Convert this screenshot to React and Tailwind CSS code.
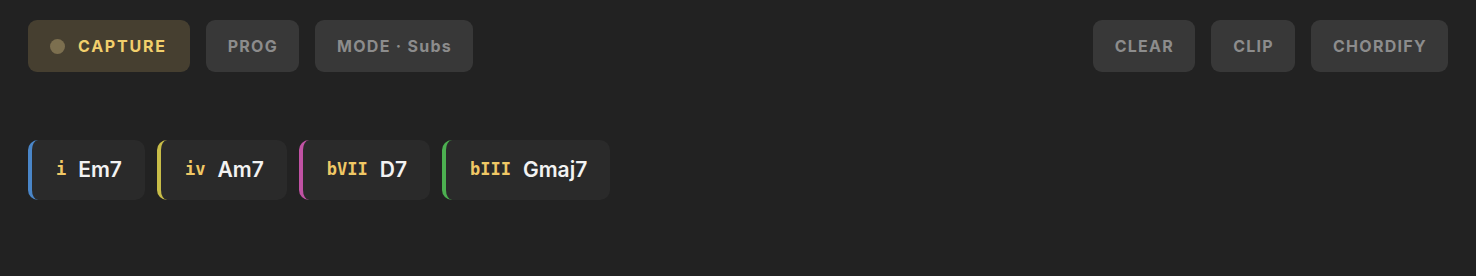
import React from "react";

const chords = [
  { num: "i", name: "Em7", color: "border-[#4a86c8]" },
  { num: "iv", name: "Am7", color: "border-[#c8bd48]" },
  { num: "bVII", name: "D7", color: "border-[#c152a4]" },
  { num: "bIII", name: "Gmaj7", color: "border-[#4caf50]" },
];

function Btn({ children }) {
  return (
    <button className="h-[52px] pl-[22px] pr-[21px] rounded-[9px] bg-[#383838] text-[#8c8c8c] text-[16px] font-bold tracking-[0.08em] flex items-center">
      {children}
    </button>
  );
}

export default function App() {
  return (
    <div
      className="w-[1476px] h-[276px] bg-[#222222] px-[28px] pt-[20px]"
      style={{ fontFamily: "Inter, 'Liberation Sans', sans-serif" }}
    >
      <div className="flex items-center justify-between">
        <div className="flex items-center gap-4">
          <button className="h-[52px] pl-[22px] pr-[23px] rounded-[9px] bg-[#463f30] flex items-center gap-[13px]">
            <span className="w-[15px] h-[15px] rounded-full bg-[#7c6f4f]" />
            <span className="text-[#f2cf6c] text-[16px] font-bold tracking-[0.11em]">CAPTURE</span>
          </button>
          <Btn>PROG</Btn>
          <Btn>MODE · Subs</Btn>
        </div>
        <div className="flex items-center gap-4">
          <Btn>CLEAR</Btn>
          <Btn>CLIP</Btn>
          <Btn>CHORDIFY</Btn>
        </div>
      </div>
      <div className="flex gap-3 mt-[68px]">
        {chords.map((c) => (
          <div
            key={c.name}
            className={`h-[60px] rounded-[10px] bg-[#2a2a2a] border-l-4 ${c.color} pl-[24px] pr-[23px] flex items-center gap-3`}
          >
            <span
              className="text-[#f0c865] text-[17px] font-bold"
              style={{ fontFamily: "'DejaVu Sans Mono', monospace" }}
            >
              {c.num}
            </span>
            <span className="text-[#f2f2f2] text-[21px] font-semibold">{c.name}</span>
          </div>
        ))}
      </div>
    </div>
  );
}
